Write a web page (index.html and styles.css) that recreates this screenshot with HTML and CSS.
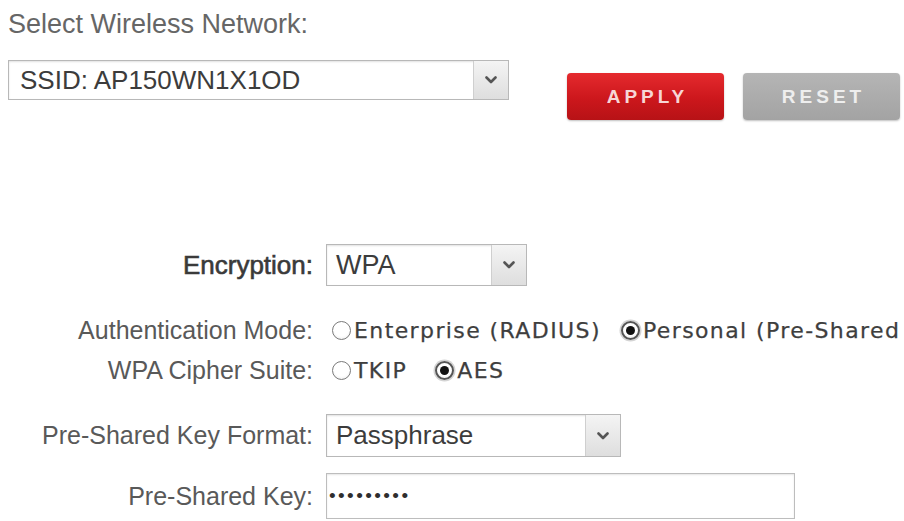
FILE: index.html
```html
<!DOCTYPE html>
<html lang="en">
<head>
<meta charset="utf-8">
<title>Wireless Security</title>
<link rel="stylesheet" href="styles.css">
</head>
<body>
<div class="page">
  <div class="title">Select Wireless Network:</div>
  <div class="net-row">
    <div class="select ssid">
      <span class="value">SSID: AP150WN1X1OD</span>
      <span class="arrow"><svg width="12" height="8" viewBox="0 0 12 8"><polyline points="1.5,1.5 6,6 10.5,1.5" fill="none" stroke="#555" stroke-width="2.6" stroke-linecap="round" stroke-linejoin="round"/></svg></span>
    </div>
    <div class="actions">
      <button class="btn apply">APPLY</button>
      <button class="btn reset">RESET</button>
    </div>
  </div>

  <div class="form">
    <div class="row enc-row">
      <span class="lbl strong">Encryption:</span>
      <div class="select enc">
        <span class="value">WPA</span>
        <span class="arrow"><svg width="12" height="8" viewBox="0 0 12 8"><polyline points="1.5,1.5 6,6 10.5,1.5" fill="none" stroke="#555" stroke-width="2.6" stroke-linecap="round" stroke-linejoin="round"/></svg></span>
      </div>
    </div>

    <div class="row auth-row">
      <span class="lbl">Authentication Mode:</span>
      <div class="radios auth">
        <span class="opt"><span class="radio"></span><span class="otext">Enterprise (RADIUS)</span></span>
        <span class="opt"><span class="radio checked"></span><span class="otext">Personal (Pre-Shared</span></span>
      </div>
    </div>

    <div class="row cipher-row">
      <span class="lbl">WPA Cipher Suite:</span>
      <div class="radios cipher">
        <span class="opt"><span class="radio"></span><span class="otext">TKIP</span></span>
        <span class="opt"><span class="radio checked"></span><span class="otext">AES</span></span>
      </div>
    </div>

    <div class="row fmt-row">
      <span class="lbl">Pre-Shared Key Format:</span>
      <div class="select fmt">
        <span class="value">Passphrase</span>
        <span class="arrow"><svg width="12" height="8" viewBox="0 0 12 8"><polyline points="1.5,1.5 6,6 10.5,1.5" fill="none" stroke="#555" stroke-width="2.6" stroke-linecap="round" stroke-linejoin="round"/></svg></span>
      </div>
    </div>

    <div class="row psk-row">
      <span class="lbl">Pre-Shared Key:</span>
      <div class="input psk"><span class="dots">•••••••••</span></div>
    </div>
  </div>
</div>
</body>
</html>
```

FILE: styles.css
```css
html, body {
  margin: 0;
  padding: 0;
  background: #ffffff;
  overflow: hidden;
}

body {
  width: 904px;
  height: 521px;
  font-family: "Liberation Sans", Arial, sans-serif;
  color: #555;
}

.page {
  padding: 9px 0 0 8px;
}

.title {
  font-size: 27px;
  line-height: 30px;
  color: #666;
  white-space: nowrap;
}

.net-row {
  display: flex;
  align-items: flex-start;
  margin-top: 21px;
}

.select {
  display: flex;
  align-items: stretch;
  box-sizing: border-box;
  border: 1px solid #b8b8b8;
  background: #fff;
  box-shadow: inset 0 1px 2px rgba(0, 0, 0, 0.12);
}

.select .value {
  flex: 1;
  display: flex;
  align-items: center;
  padding-left: 11px;
  font-size: 26px;
  color: #3c3c3c;
  white-space: nowrap;
}

.select .arrow {
  width: 34px;
  display: flex;
  align-items: center;
  justify-content: center;
  border-left: 1px solid #cfcfcf;
  background: linear-gradient(#f4f4f4, #dedede);
}

.ssid {
  width: 501px;
  height: 40px;
}

.actions {
  display: flex;
  gap: 19px;
  margin-left: 58px;
  margin-top: 13px;
}

.btn {
  width: 157px;
  height: 47px;
  border: none;
  border-radius: 4px;
  padding: 0 0 0 4px;
  font-family: "Liberation Sans", Arial, sans-serif;
  font-weight: bold;
  font-size: 19px;
  letter-spacing: 4px;
  box-shadow: 0 1px 2px rgba(0, 0, 0, 0.25);
}

.apply {
  background: linear-gradient(#e52a2e, #cc171c 55%, #b71216);
  color: #f7d6d6;
}

.reset {
  background: linear-gradient(#b5b5b5, #a3a3a3);
  color: #eeeeee;
}

.form {
  margin-top: 124px;
  margin-left: -8px;
  display: flex;
  flex-direction: column;
}

.row {
  display: grid;
  grid-template-columns: 313px auto;
  column-gap: 13px;
  align-items: center;
  justify-content: start;
}

.lbl {
  text-align: right;
  font-size: 25px;
  color: #595959;
  white-space: nowrap;
}

.lbl.strong {
  font-size: 26px;
  color: #3a3a3a;
  -webkit-text-stroke: 0.6px #3a3a3a;
}

.enc {
  width: 201px;
  height: 42px;
}

.enc .value {
  font-size: 27px;
  padding-left: 9px;
}

.enc-row {
  height: 42px;
}

.auth-row {
  height: 40px;
  margin-top: 24px;
}

.cipher-row {
  height: 40px;
}

.fmt-row {
  height: 43px;
  margin-top: 24px;
}

.fmt {
  width: 295px;
  height: 43px;
}

.fmt .value {
  padding-left: 9px;
}

.psk-row {
  height: 46px;
  margin-top: 16px;
}

.input {
  box-sizing: border-box;
  border: 1px solid #bdbdbd;
  box-shadow: inset 0 1px 2px rgba(0, 0, 0, 0.1);
  display: flex;
  align-items: center;
}

.psk {
  width: 469px;
  height: 46px;
  padding-left: 2px;
}

.dots {
  font-size: 19px;
  letter-spacing: 2.4px;
  color: #2e2e2e;
}

.radios {
  display: flex;
  align-items: center;
  padding-left: 6px;
  white-space: nowrap;
}

.radios.auth {
  gap: 20px;
}

.radios.cipher {
  gap: 28px;
}

.opt {
  display: flex;
  align-items: center;
  gap: 3px;
  flex: none;
}

.otext {
  font-family: "DejaVu Sans", Verdana, sans-serif;
  font-size: 22px;
  letter-spacing: 1.4px;
  color: #3e3e3e;
  -webkit-text-stroke: 0.25px #3e3e3e;
}

.radio {
  position: relative;
  display: inline-block;
  flex: 0 0 19px;
  width: 19px;
  height: 19px;
  min-width: 19px;
  box-sizing: border-box;
  border-radius: 50%;
  border: 1.5px solid #7a7a7a;
  background: radial-gradient(circle at 50% 40%, #ffffff 55%, #e4e4e4);
}

.radio.checked {
  border: 2px solid #555;
  box-shadow: 0 0 0 1.5px #d4d4d4;
}

.radio.checked::after {
  content: "";
  position: absolute;
  left: 50%;
  top: 50%;
  width: 9px;
  height: 9px;
  margin: -4.5px 0 0 -4.5px;
  border-radius: 50%;
  background: #111;
}
```
